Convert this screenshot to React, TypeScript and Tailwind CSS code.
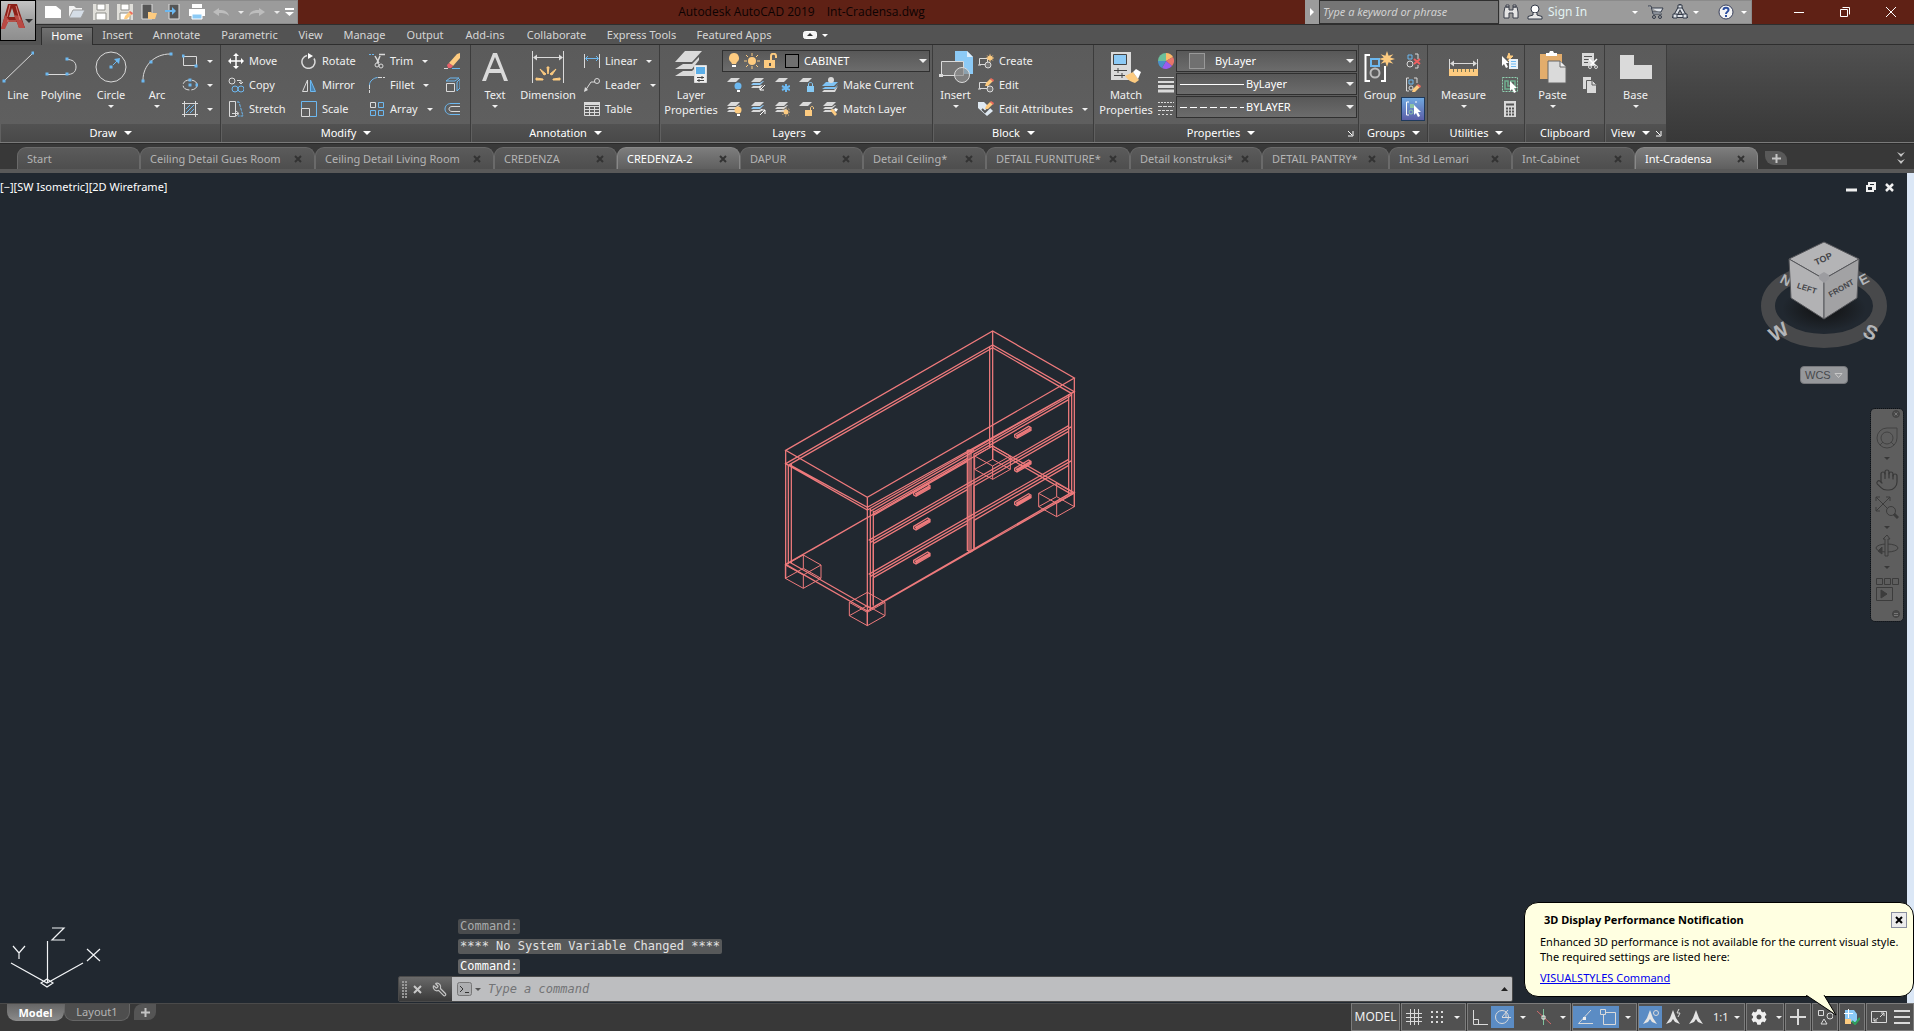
import React, { ReactNode } from 'react';
import clsx from 'clsx';
import { Wrench, Hand } from 'lucide-react';
import { FaCog } from 'react-icons/fa';

const G = '#dadada';
const B = '#6cb8f0';
const Y = '#fdcb80';

interface IconProps {
  w?: number;
  h?: number;
  className?: string;
  children: ReactNode;
}

function Icon({ w = 16, h = 16, className, children }: IconProps) {
  return (
    <svg width={w} height={h} viewBox={`0 0 ${w} ${h}`} fill="none" stroke={G} className={clsx('shrink-0', className)} aria-hidden="true">
      {children}
    </svg>
  );
}

function Caret({ big = false, className }: { big?: boolean; className?: string }) {
  return big ? (
    <svg width="8" height="4" viewBox="0 0 8 4" className={clsx('shrink-0', className)}><path d="M0 0h8L4 4z" fill="currentColor" /></svg>
  ) : (
    <svg width="6" height="3" viewBox="0 0 6 3" className={clsx('shrink-0', className)}><path d="M0 0h6L3 3z" fill="currentColor" /></svg>
  );
}

/* ---------- shared drawing bits ---------- */

const Sheets = ({ blue = false, n = 3 }: { blue?: boolean; n?: number }) => (
  <g stroke="none">
    <path d="M5 1h9l-4 4H1z" fill={G} />
    {n > 1 && <path d="M4 6h-1l-2 2h9l4-4-1 0-3 2z" fill={blue ? '#8cc8f5' : G} />}
    {n > 1 && <path d="M3 9l-2 2h9l3-3h-1l-3 1z" fill={G} />}
  </g>
);

const Cursor = ({ x, y }: { x: number; y: number }) => (
  <path transform={`translate(${x} ${y})`} d="M0 0v10l2-2 2 4 2-1-2-4h3z" fill="#fff" stroke="none" />
);

const Pencil = ({ x, y }: { x: number; y: number }) => (
  <g transform={`translate(${x} ${y})`} stroke="none">
    <path d="M0 8l1-3 4-4 3 2-5 5z" fill={Y} />
    <path d="M5 1l1-1 3 2-1 2z" fill="#ee6a5c" />
  </g>
);

const Star = ({ x, y, s = 1 }: { x: number; y: number; s?: number }) => (
  <path
    transform={`translate(${x} ${y}) scale(${s})`}
    d="M0-5l1 3 3-1-2 2 3 1-3 1 2 2-3-1-1 3-1-3-3 1 2-2-3-1 3-1-2-2 3 1z"
    fill={Y}
    stroke="none"
  />
);

const Dots = ({ pts }: { pts: number[][] }) => (
  <>{pts.map(([x, y]) => <rect key={`${x}-${y}`} x={x - 1.5} y={y - 1.5} width="3" height="3" fill={B} stroke="none" />)}</>
);

/* ---------- ribbon building blocks ---------- */

interface BigButtonProps {
  label: string;
  icon: ReactNode;
  width: string;
  caret?: boolean;
}

function BigButton({ label, icon, width, caret }: BigButtonProps) {
  return (
    <button className={clsx('flex h-full shrink-0 flex-col items-center pt-[5px] hover:bg-white/10', width)}>
      <span className="flex h-[34px] items-center">{icon}</span>
      <span className="mt-[3px] text-center whitespace-pre leading-[15px]">{label}</span>
      {caret && <Caret className="mt-[3px]" />}
    </button>
  );
}

interface RowButtonProps {
  label?: string;
  title?: string;
  icon: ReactNode;
  caret?: boolean;
  active?: boolean;
}

function RowButton({ label, title, icon, caret, active }: RowButtonProps) {
  return (
    <button
      aria-label={label ?? title}
      className={clsx('flex h-6 items-center gap-[5px] whitespace-nowrap', active && 'border border-[#1f3a5c] bg-linear-to-b from-[#6fa8e0] to-[#5b5fa8]')}
    >
      {icon}
      {label && <span>{label}</span>}
      {caret && <Caret className="mx-1" />}
    </button>
  );
}

function Column({ width, children }: { width: string; children: ReactNode }) {
  return <div className={clsx('flex shrink-0 flex-col pt-1', width)}>{children}</div>;
}

interface PanelProps {
  title: string;
  width: string;
  menu?: boolean;
  launcher?: boolean;
  children: ReactNode;
}

function Panel({ title, width, menu = true, launcher, children }: PanelProps) {
  return (
    <section className={clsx('flex shrink-0 flex-col border-r border-[#3c3c3c]', width)}>
      <div className="flex h-[79px] bg-linear-to-b from-[#5b5b5b] to-[#5f5f5f]">{children}</div>
      <div className="flex h-[18px] items-center border-l border-[#606060] bg-linear-to-b from-[#525252] to-[#494949]">
        <button className="flex flex-1 items-center justify-center gap-[7px] text-white">
          {title}
          {menu && <Caret big />}
        </button>
        {launcher && (
          <button aria-label={`${title} settings`} className="pr-1">
            <Icon w={7} h={7}><path d="M1 1l4 4M6 1v5H1" stroke="#fff" /></Icon>
          </button>
        )}
      </div>
    </section>
  );
}

interface ComboProps {
  label: string;
  value: string;
  before: ReactNode;
}

function Combo({ label, value, before }: ComboProps) {
  return (
    <div className="flex h-[22px] items-center border border-[#303030] bg-linear-to-b from-[#585858] to-[#6c6c6c]">
      {before}
      <select aria-label={label} className="min-w-0 flex-1 appearance-none bg-transparent text-white outline-none">
        <option>{value}</option>
      </select>
      <Caret big className="mr-[2px]" />
    </div>
  );
}

/* ---------- title bar ---------- */

function TitleBar() {
  return (
    <header className="flex h-6 bg-[#5f2115]">
      <div className="ml-9 flex w-[262px] shrink-0 items-center border border-[#8b8b8b] bg-[#9b9b9b] pl-[8px] text-[#e9e9e9]">
        <button aria-label="New" className="w-6"><Icon><path d="M0 2h11l5 4v8H0z" fill="#fff" stroke="none" /></Icon></button>
        <button aria-label="Open" className="w-6"><Icon><path d="M0 14V2h5l2 2h6v3" fill="#f2f2f2" stroke="none" /><path d="M0 14L4 6h12l-4 8z" fill="#d5dde6" stroke="#9b9b9b" /></Icon></button>
        <button aria-label="Save" className="w-6"><Icon><path d="M0 0h16v16H0z" fill="#e0dfda" stroke="none" /><path d="M4 0h8v6H4zM3 9h10v7H3z" fill="#fff" stroke="#8d8d88" /></Icon></button>
        <button aria-label="Save As" className="w-6"><Icon><path d="M0 0h16v16H0z" fill="#e0dfda" stroke="none" /><path d="M4 0h8v6H4zM3 9h10v7H3z" fill="#fff" stroke="#8d8d88" /><Pencil x={7} y={7} /></Icon></button>
        <button aria-label="Open from mobile" className="w-6"><Icon><path d="M1 0h10v15H1z" fill="#555" stroke="#dcdcdc" /><path d="M7 15V8h3l1 1h5l-2 6z" fill={Y} stroke="none" /></Icon></button>
        <button aria-label="Save to mobile" className="w-6"><Icon><path d="M4 0h10v15H4z" fill="#555" stroke="#dcdcdc" /><path d="M0 6h7V3l4 4-4 4V8H0z" fill={B} stroke="none" /></Icon></button>
        <button aria-label="Plot" className="w-6"><Icon><path d="M3 0h10v4H3zM0 5h16v7H0z" fill="#fff" stroke="none" /><path d="M3 10h10v5H3z" fill="#8ccaf5" stroke="#fff" /></Icon></button>
        <button aria-label="Undo" className="flex w-9 items-center justify-between pr-[9px]">
          <Icon><path d="M0 8l6-4v2c5 0 9 1 10 6-3-3-6-3-10-3v3z" fill="#bdbdbd" stroke="none" /></Icon><Caret className="-mr-1" />
        </button>
        <button aria-label="Redo" className="flex w-9 items-center justify-between pr-[9px]">
          <Icon><path d="M16 8l-6-4v2c-5 0-9 1-10 6 3-3 6-3 10-3v3z" fill="#bdbdbd" stroke="none" /></Icon><Caret className="-mr-1" />
        </button>
        <button aria-label="Customize"><Icon w={9} h={8}><path d="M0 0h9v2H0zM0 4h9L4.500 8z" fill="#fff" stroke="none" /></Icon></button>
      </div>
      <h1 className="flex flex-1 items-center justify-center gap-3 font-['Open_Sans',sans-serif] text-[12px] text-[#0d0303]">
        <span>Autodesk AutoCAD 2019</span>
        <span>Int-Cradensa.dwg</span>
      </h1>
      <button aria-label="Toggle search" className="flex w-[14px] items-center justify-center bg-[#9b9b9b] text-white">
        <svg width="4" height="8"><path d="M0 0l4 4-4 4z" fill="currentColor" /></svg>
      </button>
      <input
        aria-label="Search"
        placeholder="Type a keyword or phrase"
        className="w-[180px] border border-[#2f2f2f] bg-[#757575] px-[3px] italic outline-none placeholder:text-[#d2d2d2]"
      />
      <div className="flex w-[253px] items-center border border-[#8b8b8b] bg-[#9b9b9b] pl-[3px] text-white">
        <button aria-label="Find" className="w-6">
          <Icon><path d="M2 3h4v3h4V3h4l1 5v6h-5V9H6v5H1V8zM3 1h3v2H3zM10 1h3v2h-3z" fill="#e4e4e4" stroke="#3a3f4a" /></Icon>
        </button>
        <button className="flex flex-1 items-center gap-[5px] text-[12px] text-[#e3f2f2]">
          <Icon><circle cx="8" cy="5" r="4" fill="#fff" stroke="#333a48" /><path d="M6 9v2l-5 1.500V15h14v-2.500L10 11V9" fill="#e8e8e8" stroke="#333a48" /></Icon>
          Sign In
        </button>
        <Caret className="mr-[10px]" />
        <button aria-label="App store" className="w-6"><Icon><path d="M0 2h3l2 8h9M4 4h11l-2 4H5" fill="#dfe3e8" stroke="#333a48" /><circle cx="6" cy="13" r="1.500" stroke="#333a48" /><circle cx="12" cy="13" r="1.500" stroke="#333a48" /></Icon></button>
        <button aria-label="Autodesk account" className="flex w-[46px] items-center gap-[5px]">
          <Icon><path d="M8 3L3 12h10z" stroke="#333a48" strokeWidth="4" /><path d="M8 3L3 12h10z" stroke="#dfe3e8" strokeWidth="2" /><path d="M1 10h4v4H1zM11 10h4v4h-4zM6 1h4v3H6z" fill="#dfe3e8" stroke="#333a48" /></Icon>
          <Caret />
        </button>
        <button aria-label="Help" className="flex items-center gap-[7px] pr-[4px]">
          <Icon><circle cx="8" cy="8" r="7" fill="#f4f4f4" stroke="#39405c" /><path d="M5.500 6c0-3 5-3 5 0 0 2-2.500 1.500-2.500 4M8 11v2" stroke="#2c4ea0" strokeWidth="2" /></Icon>
          <Caret />
        </button>
      </div>
      <div className="flex w-[162px] items-center justify-end">
        <button aria-label="Minimize" className="flex w-[46px] justify-center"><Icon w={10} h={10}><path d="M0 5.500h10" stroke="#fff" /></Icon></button>
        <button aria-label="Restore" className="flex w-[46px] justify-center"><Icon w={10} h={10}><path d="M.5 2.500h7v7h-7zM2.500.5h7v7" stroke="#fff" /></Icon></button>
        <button aria-label="Close" className="flex w-[46px] justify-center"><Icon w={10} h={10}><path d="M0 0l10 10M10 0L0 10" stroke="#fff" /></Icon></button>
      </div>
    </header>
  );
}

function AppMenu() {
  return (
    <button aria-label="Application menu" className="absolute top-0 left-0 z-10 flex h-[41px] w-9 items-start border border-black bg-linear-to-b from-[#c4c4c4] via-[#a0a0a0] to-[#8e8e8e] pt-[2px] text-[#333]">
      <svg width="24" height="28" viewBox="0 0 24 28">
        <path d="M0 26L7 1h9l8 24h-6l-2-6H7L3 26zM8 14h6l-3-9z" fill="#8d2119" />
        <path d="M0 26l4-14 4 5-4 9zM18 25l-5-13 6 1 5 12z" fill="#b94a44" />
        <path d="M9 2l-3 12M15 3l4 14M6 18h9" stroke="#d9827b" fill="none" />
      </svg>
      <Caret big className="mt-4" />
    </button>
  );
}

const RIBBON_TABS = [
  { name: 'Home', width: 'w-[52px]' },
  { name: 'Insert', width: 'w-[49px]' },
  { name: 'Annotate', width: 'w-[69px]' },
  { name: 'Parametric', width: 'w-[77px]' },
  { name: 'View', width: 'w-[45px]' },
  { name: 'Manage', width: 'w-[63px]' },
  { name: 'Output', width: 'w-[58px]' },
  { name: 'Add-ins', width: 'w-[62px]' },
  { name: 'Collaborate', width: 'w-[81px]' },
  { name: 'Express Tools', width: 'w-[89px]' },
  { name: 'Featured Apps', width: 'w-[96px]' },
];

function RibbonTabs() {
  return (
    <nav className="flex h-[21px] items-end border-t border-[#2e2e2e] bg-[#535353] pl-[41px]">
      {RIBBON_TABS.map((tab, i) => (
        <button
          key={tab.name}
          className={clsx(
            'h-[18px] shrink-0 pb-[2px] text-center leading-[15px] whitespace-nowrap',
            tab.width,
            i === 0 ? 'border border-b-0 border-[#2e2e2e] bg-linear-to-b from-[#707070] to-[#5b5b5b] text-white' : 'border-b border-[#2e2e2e] text-[#d6d6d6]'
          )}
        >
          {tab.name}
        </button>
      ))}
      <div className="flex h-[18px] flex-1 items-center gap-[5px] border-b border-[#2e2e2e] pb-px pl-[21px] text-white">
        <button aria-label="Minimize ribbon">
          <Icon w={14} h={8}><rect x=".5" y=".5" width="13" height="7" rx="2" fill="#f4f4f4" stroke="#fff" /><path d="M4 5h6L7 2z" fill="#333" stroke="none" /></Icon>
        </button>
        <Caret />
      </div>
    </nav>
  );
}

/* ---------- ribbon panels ---------- */

function DrawPanel() {
  return (
    <Panel title="Draw" width="w-[221px]">
      <BigButton label="Line" width="w-9" icon={<Icon w={32} h={32}><path d="M2 30L31 2" /><Dots pts={[[2, 30], [31, 2]]} /></Icon>} />
      <BigButton label="Polyline" width="w-[50px]" icon={<Icon w={32} h={32}><path d="M2 23.500h20M22 8.500c5 0 9 2 9 7.500s-4 7.500-9 7.500" /><Dots pts={[[2, 23], [22, 23], [22, 8]]} /></Icon>} />
      <BigButton label="Circle" width="w-[50px]" caret icon={<Icon w={32} h={32}><circle cx="16" cy="16" r="15" /><path d="M18 14l5-5" stroke={B} /><path d="M25 7l-1 6-5-5z" fill={B} stroke="none" /><Dots pts={[[16, 16]]} /></Icon>} />
      <BigButton label="Arc" width="w-[42px]" caret icon={<Icon w={32} h={32}><path d="M2 29C2 14 14 3 29 3" /><Dots pts={[[2, 30], [10, 11], [30, 3]]} /></Icon>} />
      <Column width="w-10 pl-1">
        <RowButton title="Rectangle" caret icon={<Icon><path d="M1.500 3.500h13v9h-13z" /><Dots pts={[[1, 3], [14, 13]]} /></Icon>} />
        <RowButton title="Ellipse" caret icon={<Icon><ellipse cx="8" cy="8" rx="7" ry="5" strokeDasharray="8 2" /><Dots pts={[[8, 3], [15, 8], [8, 8]]} /></Icon>} />
        <RowButton title="Hatch" caret icon={<Icon><path d="M2.500 0v16M13.500 0v16M0 2.500h16M0 13.500h16" /><path d="M4 8l4-4M4 12l8-8M8 12l4-4" stroke={B} /></Icon>} />
      </Column>
    </Panel>
  );
}

function ModifyPanel() {
  return (
    <Panel title="Modify" width="w-[250px]">
      <Column width="w-[80px] pl-[7px]">
        <RowButton label="Move" icon={<Icon><path d="M8 2v12M2 8h12" strokeWidth="1.500" stroke="#fff" /><path d="M8 0l3 3H5zM8 16l3-3H5zM0 8l3-3v6zM16 8l-3-3v6z" fill="#fff" stroke="none" /></Icon>} />
        <RowButton label="Copy" icon={<Icon><circle cx="4" cy="4" r="3" /><path d="M9 3.500h4v3M11 5l2 2 2-2" /><g stroke={B}><circle cx="7" cy="12" r="3" /><circle cx="13" cy="12" r="3" /></g></Icon>} />
        <RowButton label="Stretch" icon={<Icon><path d="M1.500.5h6v15h-6zM4 12.500h6M8 10l3 2.500L8 15" /><path d="M9 1l2 0 4 14h-5" stroke={B} strokeDasharray="3 1" /></Icon>} />
      </Column>
      <Column width="w-[68px]">
        <RowButton label="Rotate" icon={<Icon><path d="M6 2.500a6.500 6.500 0 1 0 7 3" strokeWidth="1.500" /><path d="M7 0l5 3-5 3z" fill="#fff" stroke="none" /></Icon>} />
        <RowButton label="Mirror" icon={<Icon><path d="M6.500 3v11.500h-5z" /><path d="M9.500 3v11.500h5z" stroke={B} fill="#4c84b0" /></Icon>} />
        <RowButton label="Scale" icon={<Icon><path d="M.5 7.500V.5h15v15H9" stroke={B} /><path d="M.5 7.500h8v8h-8z" /></Icon>} />
      </Column>
      <Column width="w-[75px]">
        <RowButton label="Trim" caret icon={<Icon><path d="M0 1.500h6" stroke={B} strokeDasharray="2 1" /><path d="M10 1.500h6M6 3l4 7M11 3l-3 7" strokeWidth="1.500" /><circle cx="8" cy="12" r="2" /><circle cx="12" cy="13" r="2" /></Icon>} />
        <RowButton label="Fillet" caret icon={<Icon><path d="M.5 8v8M9 .5h7" strokeDasharray="4 1" /><path d="M.5 8c0-4 4-7 8-7.500" stroke={B} /></Icon>} />
        <RowButton label="Array" caret icon={<Icon><path d="M1.500 1.500h5v5h-5z" /><path d="M9.500 1.500h5v5h-5zM1.500 9.500h5v5h-5zM9.500 9.500h5v5h-5z" stroke={B} /></Icon>} />
      </Column>
      <Column width="w-6">
        <RowButton title="Erase" icon={<Icon><path d="M5 10l8-9 3-1v5l-7 8z" fill={Y} stroke="none" /><path d="M3 12l2-2 4 3-2 2H4z" fill="#e8606a" stroke="none" /><path d="M0 15.500h4" /><path d="M8 15.500h8" stroke={B} /></Icon>} />
        <RowButton title="Explode" icon={<Icon><path d="M2.500 6.500h8v8h-8z" /><path d="M2 4l4-3h9l-4 3zM13 5l3-3v9l-3 3z" stroke={B} /></Icon>} />
        <RowButton title="Offset" icon={<Icon><path d="M16 2.500H7c-8 0-8 11 0 11h9" stroke={B} /><path d="M16 5.500H8c-4 0-4 5 0 5h8" /></Icon>} />
      </Column>
    </Panel>
  );
}

function AnnotationPanel() {
  return (
    <Panel title="Annotation" width="w-[189px]">
      <BigButton label="Text" width="w-12" caret icon={<Icon w={28} h={30}><path d="M1 29L12 1h4l11 28h-4l-3-8H8l-3 8zM9 17h10L14 5z" fill={G} stroke="none" fillRule="evenodd" /></Icon>} />
      <BigButton
        label="Dimension"
        width="w-[58px]"
        icon={
          <Icon w={32} h={32}>
            <path d="M.5 0v32M31.500 0v32M2 6.500h28" />
            <path d="M1 6.500l4-3v6zM31 6.500l-4-3v6z" fill={G} stroke="none" />
            <path d="M15 16l1 7 1-7zM8 18l4 6 2-1zM24 18l-4 6-2-1zM4 27l7 1v1H4zM28 27l-7 1v1h7z" fill={Y} stroke={Y} />
          </Icon>
        }
      />
      <Column width="w-[83px] pl-[7px]">
        <RowButton label="Linear" caret icon={<Icon><path d="M.5 1v14M15.500 1v14" /><path d="M2 5.500h12M4 3L1.500 5.500 4 8M12 3l2.500 2.500L12 8" stroke={B} /></Icon>} />
        <RowButton label="Leader" caret icon={<Icon><circle cx="13" cy="4" r="2.500" /><path d="M11 5H7l-6 9" /><path d="M0 15l1-5 3 3z" fill={G} stroke="none" /></Icon>} />
        <RowButton label="Table" icon={<Icon><path d="M.5 1.500h15v13H.5zM.5 5.500h15M.5 8.500h15M.5 11.500h15M5.500 5v10M10.500 5v10" /><path d="M0 1h16v3H0z" fill={G} stroke="none" /></Icon>} />
      </Column>
    </Panel>
  );
}

function LayersPanel() {
  return (
    <Panel title="Layers" width="w-[273px]">
      <BigButton
        label={'Layer\nProperties'}
        width="w-[62px]"
        icon={
          <Icon w={32} h={32}>
            <g fill={G} stroke="none"><path d="M10 0h17L17 11H0zM8 13h9l7-7v3l-7 9H0zM8 20h9l3-3v8H0z" /></g>
            <path d="M19.500 14.500h12v17h-12z" fill="#eee" />
            <path d="M21 16h9v7h-9z" fill="#5aaee8" stroke="none" />
            <path d="M22 26.500h7M22 29.500h7M27 25v3M24 28v3" stroke="#444" />
          </Icon>
        }
      />
      <div className="flex w-[208px] flex-col pt-[5px]">
        <Combo
          label="Layer"
          value="CABINET"
          before={
            <span className="flex items-center gap-[2px] pr-[5px] pl-[3px]">
              <Icon><path d="M8 0a5 5 0 0 0-3 9l1 2h4l1-2a5 5 0 0 0-3-9z" fill={Y} stroke="none" /><path d="M6 12h4v2H6z" fill="#fff" stroke="none" /></Icon>
              <Icon><circle cx="8" cy="8" r="4" fill={Y} stroke="none" /><path d="M8 0v3M8 13v3M0 8h3M13 8h3M2 2l2 2M12 12l2 2M14 2l-2 2M4 12l-2 2" stroke={Y} /></Icon>
              <Icon><path d="M2 7h11v8H2z" fill={Y} stroke="none" /><path d="M9 7V3c0-3 5-3 5 0v2" stroke={Y} strokeWidth="2" /><path d="M7 10h2v3H7z" fill="#555" stroke="none" /></Icon>
              <span className="ml-[5px] size-[14px] border border-black bg-[#707070]" />
            </span>
          }
        />
        <div className="flex h-6 items-center gap-2 pt-[2px] pl-1">
          <button aria-label="Layer off"><Icon><Sheets n={1} /><circle cx="12" cy="9" r="3.500" fill={B} stroke="none" /><path d="M11 13h3v2h-3z" fill="#fff" stroke="none" /></Icon></button>
          <button aria-label="Layer isolate"><Icon><Sheets blue /><path d="M15 8l-5 5M10 9v4h4" stroke="#fff" /></Icon></button>
          <button aria-label="Layer freeze"><Icon><Sheets n={1} /><path d="M12 7v8M8 9l8 4M16 9l-8 4" stroke={B} strokeWidth="2" /></Icon></button>
          <button aria-label="Layer lock"><Icon><Sheets n={1} /><path d="M9 9h7v6H9z" fill="#86c9f4" stroke="none" /><path d="M10.500 9V7c0-2 4-2 4 0v2" stroke="#86c9f4" /></Icon></button>
          <button className="flex items-center gap-[5px] whitespace-nowrap"><Icon><path d="M4 5h12l-4 4H0zM3 10h10l3-3-3 5H0z" fill="#7ec2f4" stroke="none" /><path d="M2 13h10l4-4-3 6H0z" fill={G} stroke="none" /><circle cx="9" cy="3" r="3" fill={G} stroke="none" /></Icon>Make Current</button>
        </div>
        <div className="flex h-6 items-center gap-2 pt-[2px] pl-1">
          <button aria-label="Turn all layers on"><Icon><Sheets /><circle cx="12" cy="9" r="3.500" fill={Y} stroke="none" /><path d="M11 13h3v2h-3z" fill="#fff" stroke="none" /></Icon></button>
          <button aria-label="Layer unisolate"><Icon><Sheets blue /><path d="M10 14l5-5M11 9h4v4" stroke="#fff" /></Icon></button>
          <button aria-label="Thaw all layers"><Icon><Sheets /><circle cx="12" cy="11" r="2.500" fill={Y} stroke="none" /><circle cx="12" cy="11" r="4" stroke={Y} strokeDasharray="1 2" /></Icon></button>
          <button aria-label="Layer unlock"><Icon><Sheets n={1} /><path d="M7 9h7v6H7z" fill={Y} stroke="none" /><path d="M12.500 9V7c0-2 3-2 3 0v1" stroke={Y} /></Icon></button>
          <button className="flex items-center gap-[5px] whitespace-nowrap"><Icon><Sheets /><path d="M8 9l3-1 4 5-2 2z" fill={Y} stroke="none" /><path d="M13 7l3 1-2 3-2-2z" fill="#fff" stroke="none" /></Icon>Match Layer</button>
        </div>
      </div>
    </Panel>
  );
}

const BlockBase = () => <path d="M1.500 5.500h8v6h-8zM0 12h3" />;

function BlockPanel() {
  return (
    <Panel title="Block" width="w-[161px]">
      <BigButton
        label="Insert"
        width="w-[45px]"
        caret
        icon={
          <Icon w={34} h={34}>
            <path d="M16 1h12l6 6v17H16z" fill="#8ccaf6" stroke="none" />
            <path d="M28 1v6h6z" fill="#dfeefa" stroke="none" />
            <path d="M2.500 11.500h22v14h-22z" fill="#747474" />
            <circle cx="23" cy="25" r="7.500" fill="#8e8e8eb0" />
            <path d="M0 24h4v3H0z" fill={G} stroke="none" />
          </Icon>
        }
      />
      <Column width="w-[114px]">
        <RowButton label="Create" icon={<Icon><BlockBase /><circle cx="10" cy="12" r="3" fill="#777" /><Star x={12} y={5} s={0.9} /></Icon>} />
        <RowButton label="Edit" icon={<Icon><BlockBase /><circle cx="12" cy="12" r="3" fill="#777" /><Pencil x={7} y={1} /></Icon>} />
        <RowButton label="Edit Attributes" caret icon={<Icon><path d="M0 1h6l9 9-6 5L0 7z" fill="#dfe9f2" stroke="none" /><path d="M4 8l3 3 5-5" stroke="#555" strokeWidth="2" /><Pencil x={7} y={0} /></Icon>} />
      </Column>
    </Panel>
  );
}

function PropertiesPanel() {
  return (
    <Panel title="Properties" width="w-[265px]" launcher>
      <BigButton
        label={'Match\nProperties'}
        width="w-16"
        icon={
          <Icon w={32} h={32}>
            <path d="M1 1h20v28H1z" fill={G} stroke="none" />
            <path d="M3.500 3.500h13v10h-13z" fill="#8ccaf6" stroke="#444" />
            <path d="M4 19.500h13M4 24.500h11M8 17v5M12 22v5" stroke="#444" />
            <path d="M15 25l8-4 6 8-4 3c-4-1-7-3-10-7z" fill={Y} stroke="none" />
            <path d="M23 21l3-3 5 3-3 7z" fill="#fff" stroke="none" />
          </Icon>
        }
      />
      <div className="flex flex-col items-center gap-2 pt-2 pr-[2px]">
        <Icon>
          <g stroke="none">
            <path d="M8 8V0a8 8 0 0 1 7 4z" fill="#fdb96a" /><path d="M8 8l7-4a8 8 0 0 1-1 9z" fill="#e8756a" />
            <path d="M8 8l6 5a8 8 0 0 1-10 2z" fill="#9a5cf0" /><path d="M8 8l-4 7A8 8 0 0 1 0 8z" fill="#4a90c8" />
            <path d="M8 8H0a8 8 0 0 1 8-8z" fill="#6cbf9a" />
          </g>
        </Icon>
        <Icon><path d="M0 .5h16" /><path d="M0 5h16" strokeWidth="2" /><path d="M0 9.500h16" strokeWidth="3" /><path d="M0 14h16" strokeWidth="3" /></Icon>
        <Icon><path d="M0 1.500h16" strokeDasharray="2 1" /><path d="M0 5.500h16" strokeDasharray="4 1" /><path d="M0 9.500h16" strokeDasharray="3 1" /><path d="M0 13.500h16" strokeDasharray="2 2" /></Icon>
      </div>
      <div className="flex flex-1 flex-col gap-px pt-[5px] pr-px">
        <Combo label="Object color" value="ByLayer" before={<span className="mr-[10px] ml-[12px] size-4 border border-[#999] bg-[#707070]" />} />
        <Combo label="Lineweight" value="ByLayer" before={<Icon w={64} h={3} className="mr-[2px] ml-[3px]"><path d="M0 1.500h64" stroke="#fff" /></Icon>} />
        <Combo label="Linetype" value="BYLAYER" before={<Icon w={64} h={3} className="mr-[2px] ml-[3px]"><path d="M0 1.500h64" stroke="#fff" strokeDasharray="7 3" /></Icon>} />
      </div>
    </Panel>
  );
}

function GroupsPanel() {
  return (
    <Panel title="Groups" width="w-[69px]">
      <BigButton
        label="Group"
        width="w-[42px]"
        icon={
          <Icon w={32} h={32}>
            <path d="M6 4H1.500v26H6M17 30h4V15" stroke="#fff" strokeWidth="2" />
            <path d="M7 8h8v7H7z" stroke={B} strokeWidth="2" />
            <circle cx="11" cy="22" r="4.500" stroke="#bbb" strokeWidth="2" />
            <Star x={23} y={8} s={1.600} />
          </Icon>
        }
      />
      <Column width="w-[24px]">
        <div className="flex flex-col [&>button]:justify-center">
          <RowButton title="Ungroup" icon={<Icon><path d="M3 2h4v4H3z" stroke={B} /><circle cx="5" cy="11" r="3" /><path d="M10 1h3v5M13 12v3h-3" /><path d="M9 6l6 5M15 6l-6 5" stroke="#ee5f60" strokeWidth="2" /></Icon>} />
          <RowButton title="Group edit" icon={<Icon><path d="M4 1H1.500v13H4M9 1h3v5" /><path d="M4 3h4v4H4z" stroke={B} /><circle cx="6" cy="11" r="2" /><Pencil x={7} y={7} /></Icon>} />
          <RowButton title="Group selection" active icon={<Icon><path d="M4 1H1.500v13H4M12 1h-2" stroke="#fff" /><path d="M5 3h4v4H5z" fill="#8bc2a6" stroke="none" /><circle cx="6" cy="11" r="2" stroke="#8bc2a6" /><Cursor x={9} y={4} /></Icon>} />
        </div>
      </Column>
    </Panel>
  );
}

function UtilitiesPanel() {
  return (
    <Panel title="Utilities" width="w-[97px]">
      <BigButton
        label="Measure"
        width="w-[71px]"
        caret
        icon={
          <Icon w={30} h={32}>
            <path d="M.5 8v10M28.500 8v10M2 12.500h25" /><path d="M1 12.500l4-3v6zM28 12.500l-4-3v6z" fill={G} stroke="none" />
            <path d="M0 18h29v7H0z" fill={Y} stroke="none" /><path d="M4.500 18v3M8.500 18v3M12.500 18v3M16.500 18v3M20.500 18v3M24.500 18v3" stroke="#775" />
          </Icon>
        }
      />
      <Column width="w-5 pl-[3px]">
        <RowButton title="Quick select" icon={<Icon><Cursor x={0} y={3} /><path d="M7 0l-2 5h3L6 8l5-5H8z" fill={Y} stroke={Y} /><path d="M7 6h9v10H7z" fill="#eaf2f8" stroke="none" /><path d="M9 8.500h5M9 11h5M9 13.500h5" stroke={B} /></Icon>} />
        <RowButton title="Select all" icon={<Icon><path d="M.5.500h15v14H.5z" stroke="#8fd0b0" strokeDasharray="2 1" /><path d="M3 4h3v5h3V4h4v8H3z" stroke="#6fb090" strokeWidth="1.500" /><Cursor x={8} y={4} /></Icon>} />
        <RowButton title="Quick calculator" icon={<Icon><path d="M2 0h12v16H2z" fill={G} stroke="none" /><path d="M4 3.500h8" stroke="#555" strokeWidth="2" /><path d="M4 7.500h8M4 10.500h8M4 13.500h8" stroke="#555" strokeWidth="2" strokeDasharray="2 1" /></Icon>} />
      </Column>
    </Panel>
  );
}

function ClipboardPanel() {
  return (
    <Panel title="Clipboard" width="w-[80px]" menu={false}>
      <BigButton
        label="Paste"
        width="w-[55px]"
        caret
        icon={<Icon w={28} h={34}><path d="M1 4h22v25H1z" fill="#e3ad6c" stroke="none" /><path d="M7 3h3l1-2h3l1 2h3v3H7z" fill="#fff" stroke="none" /><path d="M9 11h12l6 6v16H9z" fill={G} stroke="#666" /><path d="M21 11v6h6" fill="#eee" stroke="#666" /></Icon>}
      />
      <Column width="w-5 pl-[2px]">
        <RowButton title="Cut" icon={<Icon><path d="M0 0h12v13H0z" fill={G} stroke="none" /><path d="M2 3.500h8M2 6.500h5M2 9.500h4" stroke="#555" /><path d="M7 6l7 7M15 6l-7 7" stroke="#fff" strokeWidth="1.500" /><circle cx="8" cy="14" r="1.500" /><circle cx="14" cy="14" r="1.500" /></Icon>} />
        <RowButton title="Copy clip" icon={<Icon><path d="M1 0h8v12H1z" fill={G} stroke="none" /><path d="M4.500 3.500h6l4 4v9h-10z" fill={G} stroke="#5c5c5c" /><path d="M10 4v4h4" stroke="#5c5c5c" /></Icon>} />
      </Column>
    </Panel>
  );
}

function Ribbon() {
  return (
    <div className="flex h-[97px] bg-linear-to-b from-[#505050] to-[#383838] text-[#f0f0f0]">
      <DrawPanel />
      <ModifyPanel />
      <AnnotationPanel />
      <LayersPanel />
      <BlockPanel />
      <PropertiesPanel />
      <GroupsPanel />
      <UtilitiesPanel />
      <ClipboardPanel />
      <Panel title="View" width="w-[62px]" launcher>
        <BigButton label="Base" width="w-full" caret icon={<Icon w={32} h={32}><path d="M0 4h14v10h18v14H0z" fill={G} stroke="none" /></Icon>} />
      </Panel>
    </div>
  );
}

/* ---------- drawing tabs ---------- */

const FILE_TABS = [
  { name: 'Start', width: 'w-[123px]', closable: false },
  { name: 'Ceiling Detail Gues Room', width: 'w-[175px]' },
  { name: 'Ceiling Detail Living Room', width: 'w-[179px]' },
  { name: 'CREDENZA', width: 'w-[123px]' },
  { name: 'CREDENZA-2', width: 'w-[123px]', bright: true },
  { name: 'DAPUR', width: 'w-[123px]' },
  { name: 'Detail Ceiling*', width: 'w-[123px]' },
  { name: 'DETAIL FURNITURE*', width: 'w-[144px]' },
  { name: 'Detail konstruksi*', width: 'w-[132px]' },
  { name: 'DETAIL PANTRY*', width: 'w-[127px]' },
  { name: 'Int-3d Lemari', width: 'w-[123px]' },
  { name: 'Int-Cabinet', width: 'w-[123px]' },
  { name: 'Int-Cradensa', width: 'w-[123px]', bright: true },
];

function FileTabs() {
  return (
    <div className="flex h-[31px] items-end border-t border-b-4 border-t-[#7a7a7a] border-b-[#595959] bg-[#383838] pl-[17px] shadow-[inset_0_1px_0_#2a2a2a]">
      {FILE_TABS.map(tab => (
        <div
          key={tab.name}
          className={clsx(
            'flex h-[22px] shrink-0 items-center justify-between rounded-t-[9px] border-x border-t pr-[12px] pl-[9px] whitespace-nowrap',
            tab.width,
            tab.bright
              ? 'border-[#888] bg-linear-to-b from-[#7d7d7d] to-[#5f5f5f] text-white'
              : 'border-[#6a6a6a] bg-linear-to-b from-[#5b5b5b] to-[#4e4e4e] text-[#b4b4b4]'
          )}
        >
          <button>{tab.name}</button>
          {tab.closable !== false && (
            <button aria-label={`Close ${tab.name}`}>
              <Icon w={8} h={8}><path d="M1 1l6 6M7 1L1 7" stroke="#333" strokeWidth="2" /></Icon>
            </button>
          )}
        </div>
      ))}
      <button aria-label="New tab" className="mb-1 ml-[7px] flex h-[14px] w-[22px] items-center justify-center rounded-tr-[9px] rounded-bl-[9px] bg-[#595959]">
        <Icon w={9} h={9}><path d="M4.500 0v9M0 4.500h9" strokeWidth="2" stroke="#c4c4c4" /></Icon>
      </button>
      <button aria-label="More tabs" className="mr-[9px] mb-[5px] ml-auto">
        <Icon w={8} h={12}><path d="M0 0l4 2 4-2-4 5zM0 7l4 2 4-2-4 5z" fill="#c4c4c4" stroke="none" /></Icon>
      </button>
    </div>
  );
}

/* ---------- model space ---------- */

const FEET = [[292, 817], [100, 705], [860, 490], [668, 378]];
const HANDLES = [[455, 510], [455, 611], [455, 713], [758, 336], [758, 437], [758, 538]];

function Credenza() {
  return (
    <svg width="320" height="320" viewBox="0 0 960 960" fill="none" stroke="#ee7a7c" strokeWidth="3.800" className="absolute top-[147px] left-[770px]">
      {/* top slab */}
      <path d="M47 391L668 33l245 141L292 532zM47 431L668 75l245 140L292 570zM58 434L668 83l236 137L292 562z" />
      <path d="M47 391v385M668 33v50M913 174v386M292 532v385" />
      {/* carcass sides */}
      <path d="M55 436v297M64 430v300M659 80v302M668 80v340M896 222v300M905 218v304M301 566v306M310 572v282" />
      {/* base rails */}
      <path d="M47 733L292 873 913 518 668 378zM58 726L300 864M300 867L905 517M668 386L905 523M124 690L592 420" />
      {/* rails under the top */}
      <path d="M300 574L905 225M310 577L592 415M310 586L592 424M610 404L896 239" />
      {/* centre divider */}
      <path d="M592 390v303M597 388v308M603 388v308M612 405v285" />
      <path d="M592 390l10 6 10-6M592 690l10 6 8-5" />
      {/* drawer fronts */}
      <path d="M296 661L896 317M300 668L905 320M310 671L592 509M612 498L896 334" />
      <path d="M296 763L896 418M300 770L905 422M310 773L592 611M612 601L896 436" />
      <path d="M612 498v88M612 601v84M310 671v84M310 773v84" />
      {FEET.map(([x, y]) => (
        <path
          key={x}
          d={`M${x} ${y}l53 30-53 30-54-30zM${x} ${y + 40}l53 30-53 30-54-30zM${x} ${y}v40M${x} ${y + 60}v40M${x + 53} ${y + 30}v40M${x - 54} ${y + 30}v40`}
          strokeWidth="3"
        />
      ))}
      {HANDLES.map(([x, y]) => (
        <path key={`${x}-${y}`} d={`M${x - 24} ${y + 8}l42-25 7 4v8l-42 24-7-4zM${x - 20} ${y + 12}l42-24M${x - 17} ${y + 12}l4 5M${x - 18} ${y + 15}l42-24`} />
      ))}
    </svg>
  );
}

function ViewCube() {
  return (
    <svg width="132" height="120" viewBox="0 0 132 120" className="absolute top-[62px] right-[19px]" fontFamily="'Liberation Sans', sans-serif" fontWeight="bold">
      <defs>
        <radialGradient id="cubeShadow"><stop offset="0" stopColor="#111" /><stop offset="1" stopColor="#111" stopOpacity="0" /></radialGradient>
      </defs>
      <ellipse cx="68" cy="71" rx="56" ry="35" fill="none" stroke="#48494b" strokeWidth="14" />
      <ellipse cx="68" cy="74" rx="42" ry="22" fill="url(#cubeShadow)" />
      <g fill="#b3b5b8" fontSize="20">
        <text x="13" y="104" transform="rotate(-30 22 97)">W</text>
        <text x="108" y="104" transform="rotate(28 114 97)">S</text>
        <text x="25" y="49" fontSize="14" transform="rotate(28 28 44)">N</text>
        <text x="103" y="49" fontSize="14" transform="rotate(-28 108 44)">E</text>
      </g>
      <g stroke="#55565a">
        <path d="M68 7l35 17-35 20-35-20z" fill="#b4b4b6" />
        <path d="M33 24l35 20v40L35 63z" fill="#b2b2b4" />
        <path d="M103 24L68 44v40l33-21z" fill="#a2a2a4" />
      </g>
      <path d="M63 40l5-3 5 3v4l-5 4-5-4z" fill="#9c9ca0" />
      <g fill="#45464a" textAnchor="middle">
        <text x="67" y="27" fontSize="9" transform="rotate(-24 67 23)">TOP</text>
        <text x="51" y="56" fontSize="8" transform="rotate(18 51 53)">LEFT</text>
        <text x="85" y="56" fontSize="8" transform="rotate(-30 85 53)">FRONT</text>
      </g>
    </svg>
  );
}

function NavBar() {
  return (
    <div className="absolute top-[236px] right-[4px] flex h-[212px] w-8 flex-col items-center rounded-[4px] bg-[#5e5e5e] text-[#383838] outline-1 outline-dotted outline-black/60">
      <Icon w={8} h={8} className="mt-px mr-[3px] self-end"><circle cx="4" cy="4" r="3.500" fill="#484848" stroke="#444" /><path d="M2.500 2.500l3 3M5.500 2.500l-3 3" stroke="#777" /></Icon>
      <button aria-label="Steering wheel" className="mt-[9px]">
        <Icon w={22} h={22}><g stroke="#424242"><path d="M21 1v10a10 10 0 1 1-10-10z" /><circle cx="11" cy="11" r="6" /><path d="M4 18l3-3M18 18l-3-3" /></g></Icon>
      </button>
      <Caret className="mt-[8px]" />
      <button aria-label="Pan" className="mt-[8px]"><Hand size={24} strokeWidth={1.2} /></button>
      <button aria-label="Zoom extents" className="mt-1">
        <Icon w={24} h={24}><g stroke="#3c3c3c"><path d="M1 1l14 14M15 1L1 15M1 5V1h4M11 1h4v4M1 11v4h4" /><circle cx="16" cy="15" r="4.500" fill="#5e5e5e" /><path d="M19 18l4 4" strokeWidth="3" /></g></Icon>
      </button>
      <Caret className="mt-[6px]" />
      <button aria-label="Orbit" className="mt-[5px]">
        <Icon w={24} h={24}><g stroke="#3c3c3c"><ellipse cx="12" cy="14" rx="11" ry="4" /><path d="M12 1l3 4h-2v17h-3V5H8z" fill="#5e5e5e" /><path d="M7 13v7l-4-3z" fill="#3c3c3c" /></g></Icon>
      </button>
      <Caret className="mt-[8px]" />
      <button aria-label="Show motion" className="mt-[8px]">
        <Icon w={24} h={24}><g stroke="#3c3c3c"><path d="M1.500 1.500h6v6h-6zM9.500 1.500h6v6h-6zM17.500 1.500h6v6h-6zM1.500 10.500h16v13h-16z" /><path d="M6 13v8l6-4z" fill="#3c3c3c" /></g></Icon>
      </button>
      <Icon w={8} h={8} className="mt-auto mr-[3px] mb-[3px] self-end"><circle cx="4" cy="4" r="3.500" fill="#484848" stroke="#444" /><path d="M2 3.500h4M2 5.500h4" stroke="#777" /></Icon>
    </div>
  );
}

function UcsIcon() {
  return (
    <svg width="92" height="62" viewBox="0 0 92 62" fill="none" stroke="#f2f4f6" strokeWidth="1.200" className="absolute bottom-[14px] left-[10px]">
      <path d="M37.500 14v42M1 36l36 20 36-20M31 56l6-4 6 4-6 4z" />
      <path d="M42 1h12L42 13h13M3 19l6 7 6-7M9 26v6M77 22l13 12M90 22L77 34" />
    </svg>
  );
}

function CommandLine() {
  return (
    <div className="mt-auto mr-[394px] ml-[398px] font-['DejaVu_Sans_Mono',monospace] text-[12px]">
      <div className="mb-[2px] flex flex-col items-start gap-[5px] pl-[60px] leading-[15px] text-[#e2e2e2] [&>span]:rounded-[2px] [&>span]:px-[2px]">
        <span className="bg-[#494b4d] text-[#a9abac]">Command:</span>
        <span className="bg-[#57595a]">**** No System Variable Changed ****</span>
        <span className="bg-[#626364] text-white">Command:</span>
      </div>
      <div className="mb-px flex h-[26px] overflow-hidden rounded-[2px] border border-[#4a4a4a]">
        <div className="flex w-[53px] items-center bg-linear-to-b from-[#6a6a6a] to-[#3a3a3a] pl-[3px]">
          <Icon w={5} h={17}><path d="M1 0v17M4 0v17" stroke="#999" strokeWidth="2" strokeDasharray="2 1" /></Icon>
          <button aria-label="Close command line" className="ml-[6px]"><Icon w={9} h={9}><path d="M1 1l7 7M8 1L1 8" strokeWidth="2" stroke="#c8c8c8" /></Icon></button>
          <button aria-label="Customize command line" className="ml-[10px] text-[#c4c4c4]"><Wrench size={15} className="-scale-x-100" /></button>
        </div>
        <label className="flex flex-1 items-center bg-[#bdbec0] pl-[5px] text-[#555]">
          <Icon w={15} h={14}><rect x=".5" y=".5" width="14" height="13" rx="2" fill="#adaeb0" stroke="#777" /><path d="M3 4l3 3-3 3M8 10.500h4" stroke="#333" /></Icon>
          <Caret className="mx-[3px]" />
          <input aria-label="Command" placeholder="Type a command" className="min-w-0 flex-1 bg-transparent pl-1 italic outline-none placeholder:text-[#737476]" />
          <svg width="7" height="4" className="mr-[4px] text-[#222]"><path d="M0 4h7L3.500 0z" fill="currentColor" /></svg>
        </label>
      </div>
    </div>
  );
}

function ModelSpace() {
  return (
    <main className="flex min-h-[600px] flex-1 bg-[#dbe7f6]">
      <div className="relative mr-[7px] flex flex-1 flex-col overflow-hidden bg-[#212830]">
        <div className="flex justify-between pt-[6px] text-white">
          <span>[−][SW Isometric][2D Wireframe]</span>
          <div className="flex items-center gap-[9px] pr-[13px]">
            <button aria-label="Minimize drawing"><Icon w={11} h={10}><path d="M0 8h11" strokeWidth="3" stroke="#f0f0f0" /></Icon></button>
            <button aria-label="Restore drawing"><Icon w={10} h={10}><path d="M1 4h6v5H1zM3 3V1h6v6H7" strokeWidth="2" stroke="#f0f0f0" /></Icon></button>
            <button aria-label="Close drawing"><Icon w={9} h={9}><path d="M1 1l7 7M8 1L1 8" strokeWidth="2.500" stroke="#f0f0f0" /></Icon></button>
          </div>
        </div>
        <Credenza />
        <ViewCube />
        <button className="absolute top-[193px] right-[59px] flex h-[18px] w-12 items-center justify-between rounded-[4px] border border-[#77787c] bg-[#96989b] px-1 font-['Liberation_Sans',sans-serif] text-[#46484c]">
          WCS
          <svg width="9" height="5" fill="none" stroke="#c8c8c8"><path d="M1 .5h7l-3.500 4z" /></svg>
        </button>
        <NavBar />
        <UcsIcon />
        <CommandLine />
      </div>
    </main>
  );
}

/* ---------- status bar ---------- */

function StatusGroup({ width, children }: { width: string; children: ReactNode }) {
  return <div className={clsx('flex h-7 shrink-0 items-center border border-[#7c7c7c] bg-[#515151]', width)}>{children}</div>;
}

interface ToggleProps {
  title: string;
  on?: boolean;
  children: ReactNode;
}

function Toggle({ title, on, children }: ToggleProps) {
  return (
    <button aria-label={title} aria-pressed={on} className={clsx('flex h-[22px] w-[23px] shrink-0 items-center justify-center', on && 'bg-[#5b8cc4]')}>
      {children}
    </button>
  );
}

const Compass = ({ mark }: { mark?: ReactNode }) => (
  <Icon><path d="M7 1l3 8 4 6-5-2-2-3-2 3-5 2 4-6z" fill="#e4e4e4" stroke="none" />{mark}</Icon>
);

function StatusBar() {
  return (
    <footer className="flex h-7 bg-[#383838]">
      <div className="flex flex-1 items-start border-t border-[#4a4a4a] pl-[7px]">
        <button className="h-[17px] w-[57px] rounded-b-[9px] bg-linear-to-b from-[#666] to-[#8c8c8c] leading-[16px] font-bold text-white">Model</button>
        <button className="h-[17px] w-[66px] rounded-b-[9px] border-x border-b border-[#666] bg-[#4e4e4e] text-[#b4b4b4] leading-[16px]">Layout1</button>
        <button aria-label="New layout" className="ml-1 flex h-4 w-[22px] items-center justify-center rounded-tl-[8px] rounded-br-[8px] bg-[#555]">
          <Icon w={9} h={9}><path d="M4.500 0v9M0 4.500h9" strokeWidth="2" stroke="#c4c4c4" /></Icon>
        </button>
      </div>
      <div className="flex gap-px text-[#f0f0f0]">
        <StatusGroup width="w-[49px]"><button className="w-full text-[12px]">MODEL</button></StatusGroup>
        <StatusGroup width="w-[65px]">
          <Toggle title="Grid"><Icon><path d="M4.500 0v16M8.500 0v16M12.500 0v16M0 4.500h16M0 8.500h16M0 12.500h16" /></Icon></Toggle>
          <Toggle title="Snap"><Icon><path d="M2 3h14M2 8h14M2 13h14" strokeWidth="2" strokeDasharray="2 3" /></Icon></Toggle>
          <Caret className="ml-[6px]" />
        </StatusGroup>
        <StatusGroup width="w-[104px]">
          <Toggle title="Ortho"><Icon><path d="M1.500 1v14.500H16M1.500 10.500h5v5" /></Icon></Toggle>
          <Toggle title="Polar tracking" on><Icon><circle cx="7" cy="8" r="6.500" /><path d="M7 8l6-7M7 8.500h9M11 3v6" /></Icon></Toggle>
          <Caret className="mx-[6px]" />
          <Toggle title="Object snap tracking"><Icon><path d="M1 2l14 13" stroke="#d06a6a" /><path d="M7.500 0v16" stroke="#7ec09a" /><path d="M6 7h3v3H6z" stroke="#eee" /></Icon></Toggle>
          <Caret className="ml-[5px]" />
        </StatusGroup>
        <StatusGroup width="w-[65px]">
          <Toggle title="Isometric drafting" on><Icon><path d="M14 1L1.500 14.500H16" /><path d="M6 8h3v3H6z" fill="#eee" stroke="none" /></Icon></Toggle>
          <Toggle title="Object snap" on><Icon><path d="M6 3.500h9.500v12h-12V6" /><path d="M.5.500h5v5h-5z" /></Icon></Toggle>
          <Caret className="ml-[6px]" />
        </StatusGroup>
        <StatusGroup width="w-[107px]">
          <Toggle title="Annotation visibility" on><Compass mark={<circle cx="13" cy="4" r="2.500" />} /></Toggle>
          <Toggle title="Auto scale"><Compass mark={<path d="M13 0l-2 4h3l-2 4" />} /></Toggle>
          <Toggle title="Annotation scale"><Compass /></Toggle>
          <button className="ml-[5px] flex items-center gap-[5px]">1:1 <Caret /></button>
        </StatusGroup>
        <StatusGroup width="w-[38px]">
          <Toggle title="Workspace"><FaCog size={16} /></Toggle>
          <Caret className="ml-[6px]" />
        </StatusGroup>
        <StatusGroup width="w-[26px]"><Toggle title="Annotation monitor"><Icon><path d="M8 0v16M0 8h16" strokeWidth="2" /></Icon></Toggle></StatusGroup>
        <StatusGroup width="w-[26px]"><Toggle title="Isolate objects"><Icon><path d="M1.500 1.500h5v5h-5z" /><circle cx="13" cy="7" r="3" /><path d="M7 10l3 5H4z" /></Icon></Toggle></StatusGroup>
        <StatusGroup width="w-[26px]">
          <Toggle title="Hardware acceleration"><Icon><path d="M1 1h9l3 4v8H1z" fill="#8ccaf6" stroke="none" /><path d="M1 10h6v5H1z" fill={Y} stroke="none" /><path d="M0 4.500h9M4.500 0v9" stroke="#fff" /><path d="M8 12l3 3 5-6" stroke="#2fa05c" strokeWidth="2" /></Icon></Toggle>
        </StatusGroup>
        <StatusGroup width="w-[48px]">
          <Toggle title="Clean screen"><Icon><path d="M.5 2.500h15v11H.5z" /><path d="M9 8l4-4M10 4h3v3M7 9l-4 3M3 9v3h3" strokeWidth="1" /></Icon></Toggle>
          <Toggle title="Customization"><Icon><path d="M0 2h16M0 8h16M0 14h16" strokeWidth="2" /></Icon></Toggle>
        </StatusGroup>
      </div>
    </footer>
  );
}

function Notification() {
  return (
    <aside role="alert" className="absolute right-0 bottom-[34px] z-20 h-[95px] w-[390px] rounded-[14px] border border-black bg-[#ffffe1] pt-[9px] pr-[6px] pl-[15px] text-black">
      <div className="flex h-4 items-center justify-between pl-1">
        <strong>3D Display Performance Notification</strong>
        <button aria-label="Dismiss" className="flex size-4 items-center justify-center border border-[#8a8fa0] bg-[#ececec]">
          <Icon w={8} h={8}><path d="M1 1l6 6M7 1L1 7" stroke="#000" strokeWidth="2" /></Icon>
        </button>
      </div>
      <p className="mt-[6px] leading-[15px] whitespace-nowrap">
        Enhanced 3D performance is not available for the current visual style.
        <br />
        The required settings are listed here:
      </p>
      <a href="#visualstyles" className="mt-[6px] block leading-[16px] text-[#0000ee] underline">VISUALSTYLES Command</a>
      <svg width="32" height="22" viewBox="0 0 32 22" className="absolute right-[76px] -bottom-[21px]">
        <path d="M1 0l30 20L19 0" fill="#ffffe1" stroke="#000" />
      </svg>
    </aside>
  );
}

export default function App() {
  return (
    <div className="relative flex min-h-screen flex-col overflow-hidden bg-[#383838] font-['Noto_Sans','Open_Sans',sans-serif] text-[11px] leading-[16px]">
      <AppMenu />
      <TitleBar />
      <RibbonTabs />
      <Ribbon />
      <FileTabs />
      <ModelSpace />
      <StatusBar />
      <Notification />
    </div>
  );
}
